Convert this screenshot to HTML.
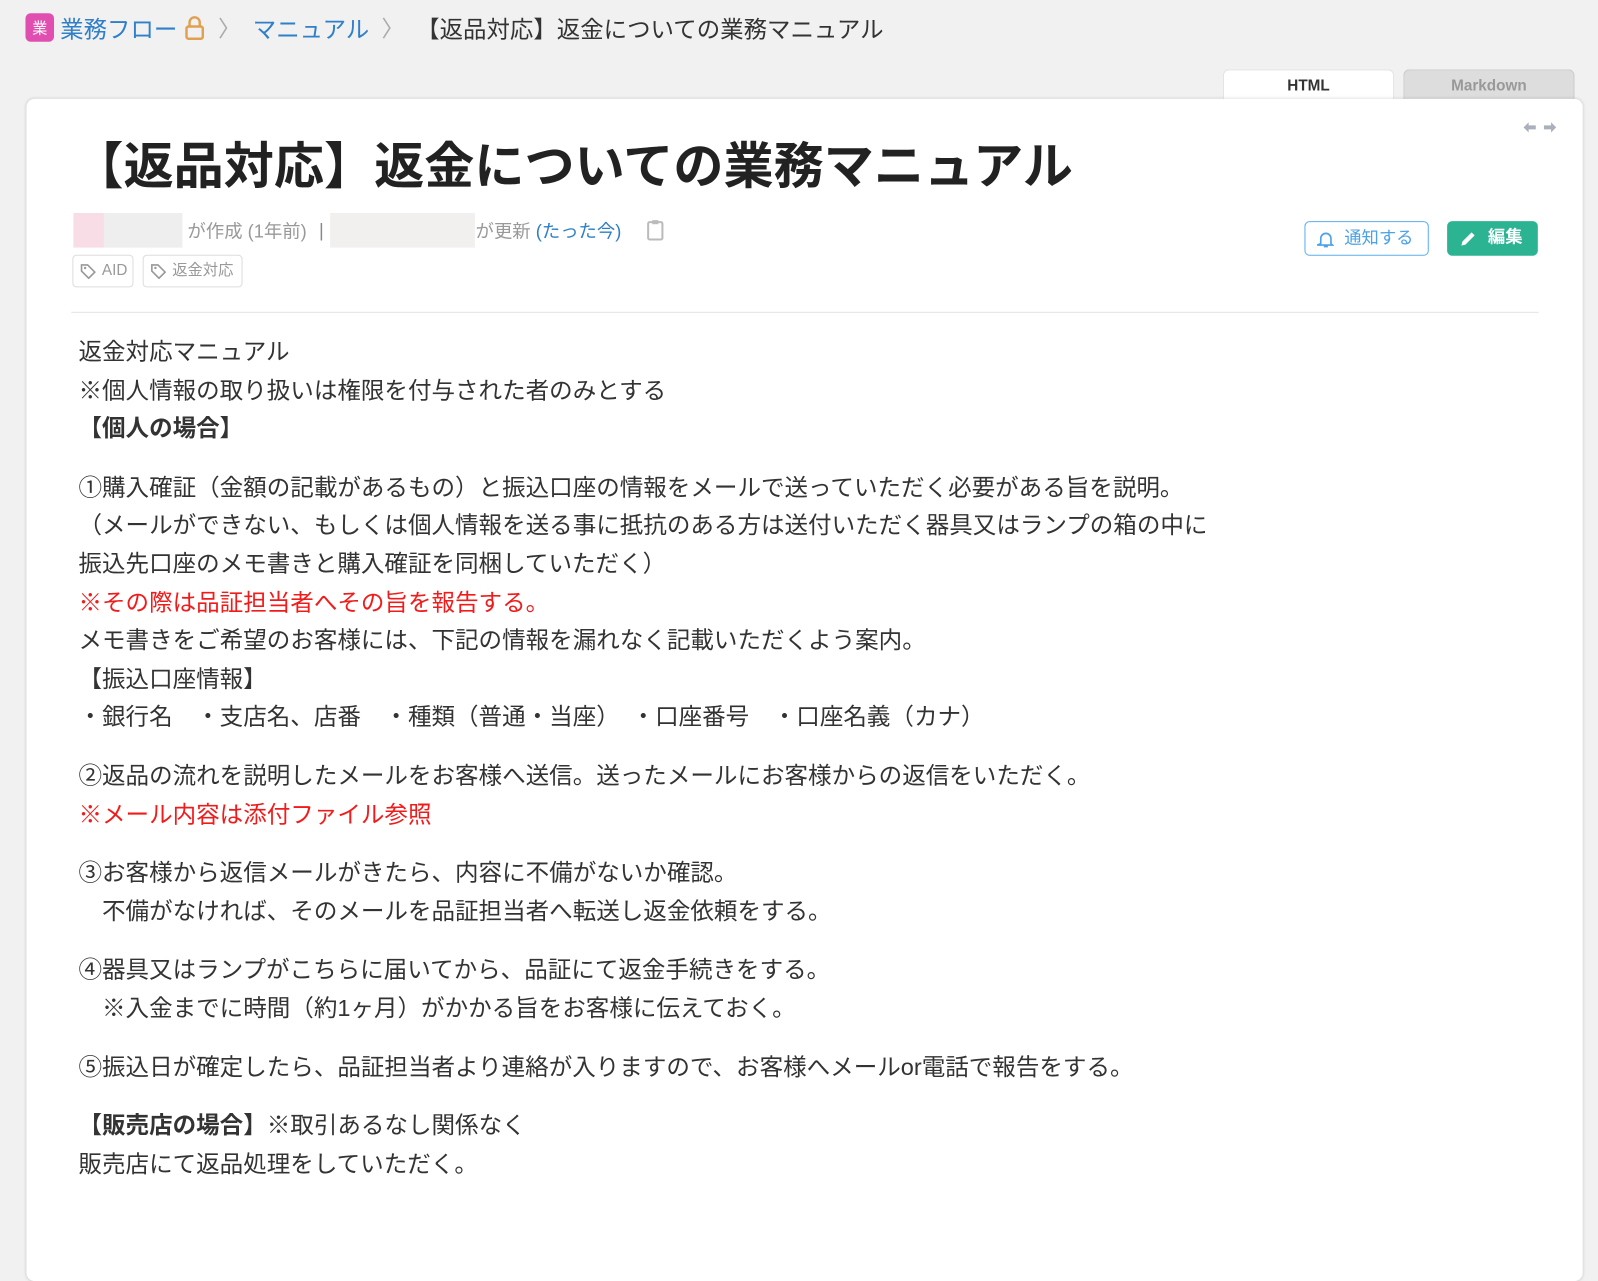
<!DOCTYPE html>
<html><head><meta charset="utf-8"><style>
*{margin:0;padding:0;box-sizing:border-box}
body{width:1598px;height:1230px;background:#f1f1f1;font-family:"Liberation Sans","Noto Sans CJK JP",sans-serif;color:#333;overflow:hidden;position:relative}
#w{position:absolute;left:0;top:0;width:1568px;height:1207px;transform:scale(1.0191);transform-origin:0 0}
.bc{position:absolute;top:10px;left:25px;font-size:23px;display:flex;align-items:center;height:34px;white-space:nowrap}
.bc .ic{width:28px;height:28px;background:#e04fb0;border-radius:5px;color:#fff;font-size:15px;display:flex;align-items:center;justify-content:center;margin-right:6px}
.bc a{color:#2f7fc9}
.sep{color:#aaa;margin:0 12px;font-size:22px}
.tabs{position:absolute;top:68px;left:1200px}
.tab{position:absolute;top:0;height:30px;border-radius:6px 6px 0 0;font-weight:bold;font-size:15px;text-align:center;line-height:32px}
.card{position:absolute;left:26px;top:97px;width:1527px;height:1160px;background:#fff;border-radius:8px;box-shadow:0 0 3px rgba(0,0,0,.15)}
h1{position:absolute;left:72px;top:124px;font-size:49.2px;font-weight:bold;color:#222;white-space:nowrap}
.meta{position:absolute;top:212px;left:72px;font-size:18px;color:#999;display:flex;align-items:center;height:28px;white-space:nowrap}
.tag{position:absolute;top:250px;height:32px;border:1.5px solid #ddd;border-radius:4px;font-size:15px;color:#999;line-height:29px;padding-left:28px}
.btn{position:absolute;top:217px;height:34px;border-radius:5px;font-size:17px;line-height:32px;white-space:nowrap}
.hr{position:absolute;left:70px;top:306px;width:1440px;height:1px;background:#e5e5e5}
.body{position:absolute;left:77px;top:327px;font-size:23.1px;line-height:37.6px;white-space:nowrap;color:#333}
.gap{height:20px}
.r{color:#f21b1b}
b{font-weight:bold}
</style></head><body><div id="w">
<div class="bc"><span class="ic">業</span><a>業務フロー</a>
<svg width="22" height="26" viewBox="0 0 22 26" style="margin-left:6px"><path d="M6 12V8a5 5 0 0 1 10 0v4" fill="none" stroke="#e0a050" stroke-width="2.4"/><rect x="3" y="12" width="16" height="12" rx="2" fill="none" stroke="#e0a050" stroke-width="2.4"/></svg>
<span class="sep">〉</span><a>マニュアル</a><span class="sep">〉</span><span style="color:#333">【返品対応】返金についての業務マニュアル</span></div>
<div class="tabs">
<div class="tab" style="left:0;width:168px;background:#fff;color:#333;border:1px solid #e3e3e3;border-bottom:none">HTML</div>
<div class="tab" style="left:177px;width:168px;background:#ddd;color:#999;border:1px solid #ccc;border-bottom:none">Markdown</div>
</div>
<div class="card"></div>
<svg width="34" height="14" viewBox="0 0 34 14" style="position:absolute;left:1494px;top:118px"><path d="M1 7l5-5v3h7v4H6v3z M33 7l-5-5v3h-7v4h7v3z" fill="#aab0bc"/></svg>
<h1>【返品対応】返金についての業務マニュアル</h1>
<div class="meta">
<span style="display:inline-block;width:30px;height:34px;background:#f9dde6"></span><span style="display:inline-block;width:77px;height:34px;background:#eee"></span>
<span style="margin-left:5px">が作成 (1年前)</span><span style="margin:0 6px 0 12px;color:#888">|</span>
<span style="display:inline-block;width:142px;height:34px;background:#f2f0ee"></span>
<span style="margin-left:1px">が更新 <span style="color:#2f7fc9">(たった今)</span></span>
<svg width="18" height="22" viewBox="0 0 18 22" style="margin-left:24px"><rect x="2" y="3" width="14" height="17" rx="1.5" fill="none" stroke="#bbb" stroke-width="2"/><rect x="6" y="1" width="6" height="4" fill="#bbb"/></svg>
</div>
<div class="tag" style="left:71px;width:60px"><svg width="16" height="16" viewBox="0 0 16 16" style="position:absolute;left:7px;top:7px"><path d="M1 2v6l7 7 6-6-7-7H1z" fill="none" stroke="#999" stroke-width="1.6"/><circle cx="4.5" cy="5" r="1.2" fill="#999"/></svg>AID</div>
<div class="tag" style="left:140px;width:98px"><svg width="16" height="16" viewBox="0 0 16 16" style="position:absolute;left:7px;top:7px"><path d="M1 2v6l7 7 6-6-7-7H1z" fill="none" stroke="#999" stroke-width="1.6"/><circle cx="4.5" cy="5" r="1.2" fill="#999"/></svg>返金対応</div>
<div class="btn" style="left:1280px;width:122px;border:1.5px solid #5aaef0;color:#4aa2e8;padding-left:38px"><svg width="18" height="18" viewBox="0 0 18 18" style="position:absolute;left:11px;top:8px"><path d="M4 13V8a5 5 0 0 1 10 0v5l1.5 1.5h-15z M7 16h4" fill="none" stroke="#4aa2e8" stroke-width="1.6"/></svg>通知する</div>
<div class="btn" style="left:1420px;width:89px;background:#2bb392;color:#fff;padding-left:40px;font-weight:bold"><svg width="18" height="18" viewBox="0 0 18 18" style="position:absolute;left:12px;top:8px"><path d="M2 16l1-4 9-9 3 3-9 9z" fill="#fff"/></svg>編集</div>
<div class="hr"></div>
<div class="body">
<div>返金対応マニュアル</div>
<div>※個人情報の取り扱いは権限を付与された者のみとする</div>
<div><b>【個人の場合】</b></div>
<div class="gap"></div>
<div>①購入確証（金額の記載があるもの）と振込口座の情報をメールで送っていただく必要がある旨を説明。</div>
<div>（メールができない、もしくは個人情報を送る事に抵抗のある方は送付いただく器具又はランプの箱の中に</div>
<div>振込先口座のメモ書きと購入確証を同梱していただく）</div>
<div class="r">※その際は品証担当者へその旨を報告する。</div>
<div>メモ書きをご希望のお客様には、下記の情報を漏れなく記載いただくよう案内。</div>
<div>【振込口座情報】</div>
<div>・銀行名　・支店名、店番　・種類（普通・当座）　・口座番号　・口座名義（カナ）</div>
<div class="gap"></div>
<div>②返品の流れを説明したメールをお客様へ送信。送ったメールにお客様からの返信をいただく。</div>
<div class="r">※メール内容は添付ファイル参照</div>
<div class="gap"></div>
<div>③お客様から返信メールがきたら、内容に不備がないか確認。</div>
<div>　不備がなければ、そのメールを品証担当者へ転送し返金依頼をする。</div>
<div class="gap"></div>
<div>④器具又はランプがこちらに届いてから、品証にて返金手続きをする。</div>
<div>　※入金までに時間（約1ヶ月）がかかる旨をお客様に伝えておく。</div>
<div class="gap"></div>
<div>⑤振込日が確定したら、品証担当者より連絡が入りますので、お客様へメールor電話で報告をする。</div>
<div class="gap"></div>
<div><b>【販売店の場合】</b>※取引あるなし関係なく</div>
<div>販売店にて返品処理をしていただく。</div>
</div>
</div></body></html>
